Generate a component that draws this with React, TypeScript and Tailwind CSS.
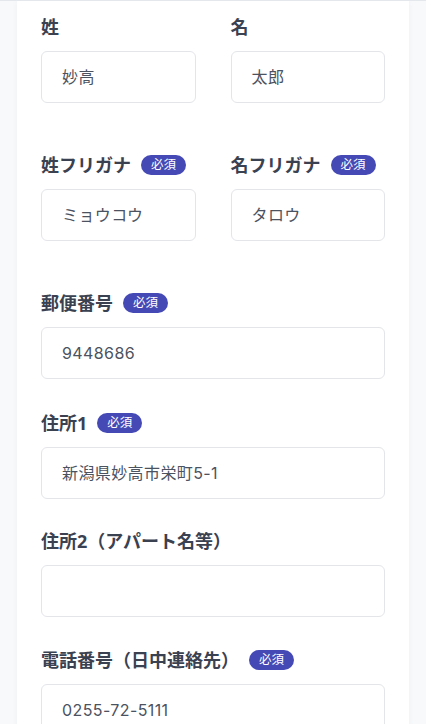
const Badge = () => (
  <span className="ml-[10px] inline-flex h-5 items-center rounded-full bg-[#4549b6] px-[10px] text-[12.5px] font-normal leading-none text-white">
    必須
  </span>
)

type FieldProps = {
  label: string
  value?: string
  required?: boolean
  className?: string
}

const Field = ({ label, value = "", required, className = "" }: FieldProps) => (
  <div className={className}>
    <div className="flex h-6 items-center">
      <span className="text-[18px] font-bold leading-6 text-[#3a4150]">{label}</span>
      {required && <Badge />}
    </div>
    <div className="mt-3 flex h-[52px] items-center rounded-md border border-[#e3e5e9] bg-white px-5">
      <span
        className="text-[16px] tracking-wide text-[#4b5260]"
        style={{ fontFamily: 'Inter, "Noto Sans CJK JP", sans-serif' }}
      >
        {value}
      </span>
    </div>
  </div>
)

const App = () => {
  return (
    <main
      className="min-h-screen overflow-hidden border-t border-[#e4e7ec] bg-[#f8f9fb]"
      style={{ fontFamily: '"Noto Sans", "Noto Sans CJK JP", sans-serif' }}
    >
      <div className="mx-[17px] min-h-[724px] bg-white px-6 pt-[14px] shadow-[0_0_6px_rgba(0,0,0,0.04)]">
        <div className="grid grid-cols-2 gap-x-[35px]">
          <Field label="姓" value="妙高" />
          <Field label="名" value="太郎" />
        </div>
        <div className="mt-[50px] grid grid-cols-2 gap-x-[35px]">
          <Field label="姓フリガナ" value="ミョウコウ" required />
          <Field label="名フリガナ" value="タロウ" required />
        </div>
        <Field className="mt-[50px]" label="郵便番号" value="9448686" required />
        <Field className="mt-8" label="住所1" value="新潟県妙高市栄町5-1" required />
        <Field className="mt-[30px]" label="住所2（アパート名等）" />
        <Field className="mt-[31px]" label="電話番号（日中連絡先）" value="0255-72-5111" required />
      </div>
    </main>
  )
}

export default App
